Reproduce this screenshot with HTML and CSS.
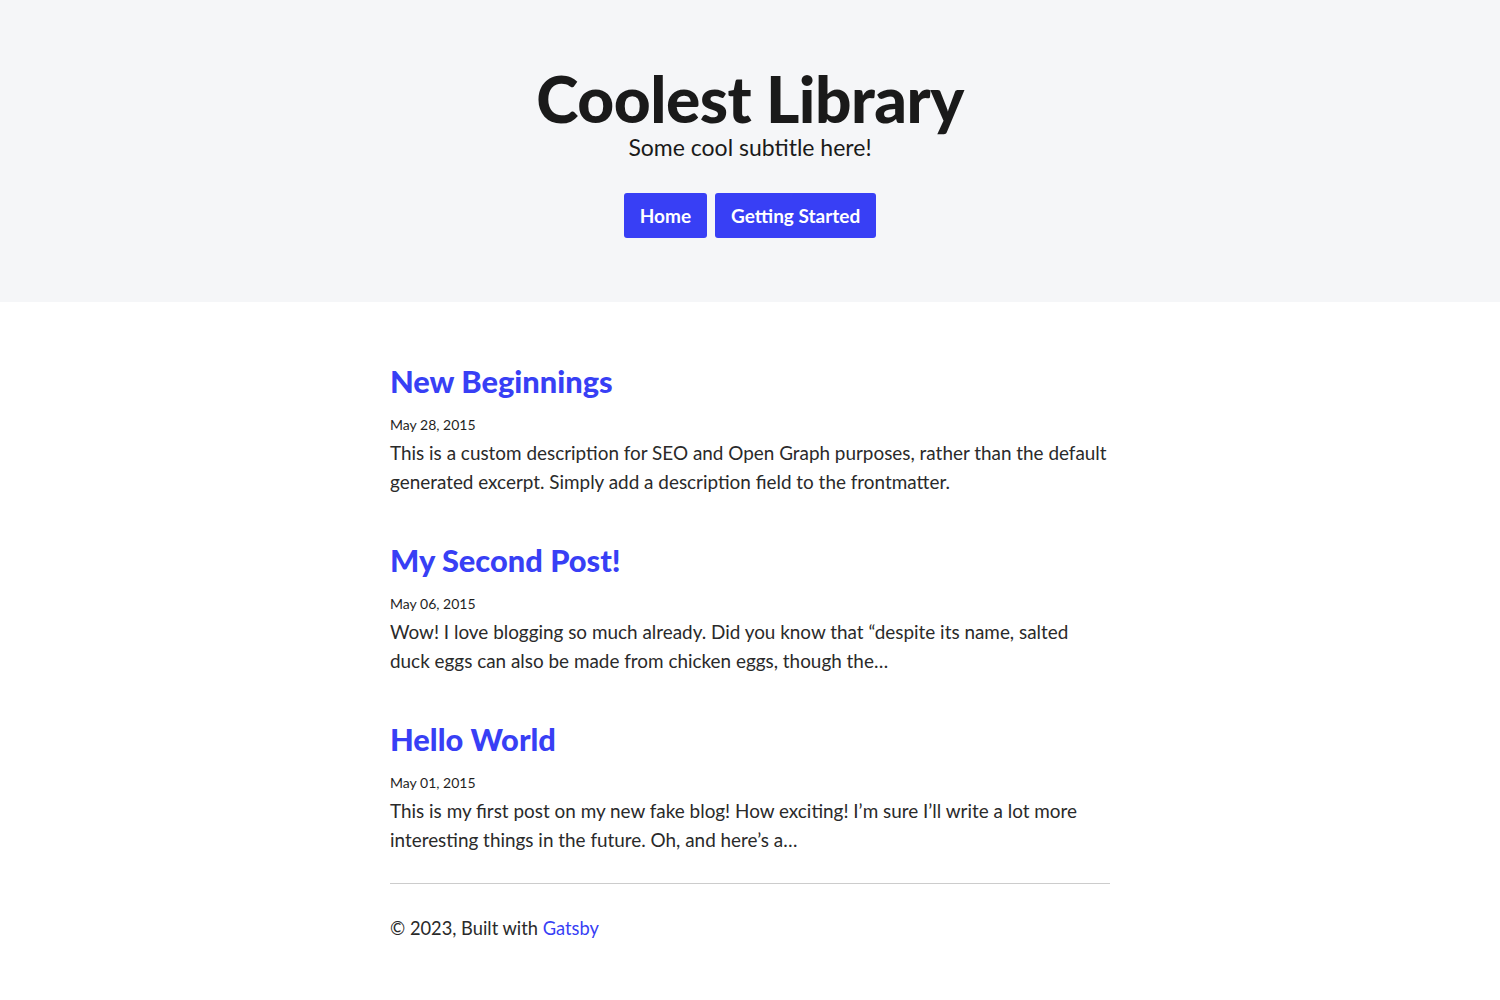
FILE: index.html
```html
<!DOCTYPE html>
<html lang="en">
<head>
<meta charset="utf-8">
<title>Coolest Library</title>
<link rel="stylesheet" href="styles.css">
</head>
<body>
<header class="hero">
  <h1 class="hero-title">Coolest Library</h1>
  <p class="hero-subtitle">Some cool subtitle here!</p>
  <nav class="hero-nav">
    <a class="btn" href="#">Home</a>
    <a class="btn" href="#">Getting Started</a>
  </nav>
</header>
<main class="content">
  <article class="post">
    <h2 class="post-title"><a href="#">New Beginnings</a></h2>
    <small class="post-date">May 28, 2015</small>
    <p class="post-desc">This is a custom description for SEO and Open Graph purposes, rather than the default generated excerpt. Simply add a description field to the frontmatter.</p>
  </article>
  <article class="post">
    <h2 class="post-title"><a href="#">My Second Post!</a></h2>
    <small class="post-date">May 06, 2015</small>
    <p class="post-desc">Wow! I love blogging so much already. Did you know that “despite its name, salted duck eggs can also be made from chicken eggs, though the…</p>
  </article>
  <article class="post">
    <h2 class="post-title"><a href="#">Hello World</a></h2>
    <small class="post-date">May 01, 2015</small>
    <p class="post-desc">This is my first post on my new fake blog! How exciting! I’m sure I’ll write a lot more interesting things in the future. Oh, and here’s a…</p>
  </article>
  <footer class="footer">
    © 2023, Built with <a href="#">Gatsby</a>
  </footer>
</main>
</body>
</html>
```
FILE: styles.css
```css
* { box-sizing: border-box; }
html, body { margin: 0; padding: 0; }
body {
  font-family: Lato, "Open Sans", "Liberation Sans", sans-serif;
  color: #1f1f1f;
  background: #ffffff;
}
a { color: #383ff5; text-decoration: none; }

.hero {
  background: #f5f6f8;
  height: 302px;
  display: flex;
  flex-direction: column;
  align-items: center;
  padding-top: 63px;
}
.hero-title {
  margin: 0;
  font-size: 64px;
  font-weight: 900;
  line-height: 72px;
  color: #1a1a1a;
  letter-spacing: -0.5px;
}
.hero-subtitle {
  margin: 0;
  font-size: 23px;
  line-height: 25px;
  color: #1a1a1a;
}
.hero-nav {
  display: flex;
  gap: 8px;
  margin-top: 33px;
}
.btn {
  display: block;
  background: #383ff5;
  color: #ffffff;
  font-weight: 700;
  font-size: 19px;
  height: 45px;
  line-height: 45px;
  padding: 0 16px;
  border-radius: 3px;
}

.content {
  width: 720px;
  margin: 0 auto;
  padding-top: 60px;
}
.post { margin-bottom: 45px; }
.post-title {
  margin: 0;
  font-size: 30.8px;
  line-height: 40px;
  font-weight: 900;
}
.post-date {
  display: block;
  margin-top: 14px;
  font-size: 14px;
  line-height: 18px;
  color: #1f1f1f;
}
.post-desc {
  margin: 4px 0 0;
  font-size: 18.9px;
  line-height: 29px;
  color: #2a2a2a;
}
.footer {
  border-top: 1px solid #cccccc;
  margin-top: -16px;
  padding-top: 29px;
  font-size: 18.3px;
  line-height: 30px;
  color: #2a2a2a;
}
```
